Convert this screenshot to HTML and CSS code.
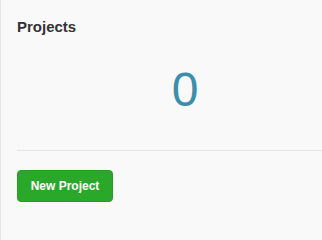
FILE: index.html
```html
<!DOCTYPE html>
<html>
<head>
<meta charset="utf-8">
<link rel="stylesheet" href="styles.css">
</head>
<body>
<div class="panel">
  <h3 class="title">Projects</h3>
  <div class="stat">0</div>
  <hr class="divider">
  <button class="btn">New Project</button>
</div>
</body>
</html>
```
FILE: styles.css
```css
html, body {
  margin: 0;
  padding: 0;
  background: #f9f9f9;
  overflow: hidden;
  height: 100%;
}
.panel {
  border-left: 1px solid #e6e6e6;
  padding: 18px 0 0 16px;
  height: 100%;
  box-sizing: border-box;
  font-family: "Liberation Sans", Arial, sans-serif;
}
.title {
  margin: 0;
  font-size: 15px;
  line-height: 18px;
  font-weight: bold;
  color: #333333;
}
.stat {
  margin-top: 30px;
  padding-left: 31px;
  text-align: center;
  font-size: 48px;
  line-height: 48px;
  color: #3d8eab;
}
.divider {
  margin: 36px 0 19px 0;
  border: 0;
  border-top: 1px solid #e5e5e5;
  height: 0;
}
.btn {
  display: block;
  height: 32px;
  padding: 0;
  width: 96px;
  white-space: nowrap;
  box-sizing: border-box;
  border: 1px solid #25a025;
  border-radius: 4px;
  background: #29a829;
  color: #ffffff;
  font-family: "Liberation Sans", Arial, sans-serif;
  font-size: 12px;
  font-weight: bold;
  line-height: 30px;
  text-align: center;
}
```
